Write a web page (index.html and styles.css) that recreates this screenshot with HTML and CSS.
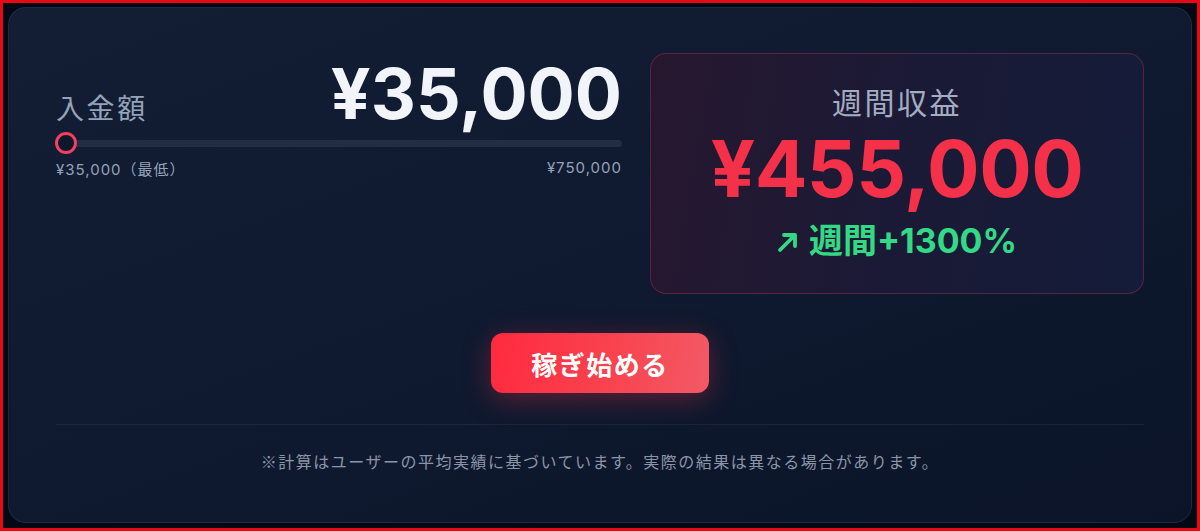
FILE: index.html
```html
<!DOCTYPE html>
<html lang="ja">
<head>
<meta charset="utf-8">
<link rel="stylesheet" href="styles.css">
</head>
<body>
<div class="frame">
  <div class="card">
    <div class="top">
      <div class="deposit">
        <div class="deposit-head">
          <span class="label">入金額</span>
          <span class="amount">¥35,000</span>
        </div>
        <div class="slider">
          <div class="track"></div>
          <div class="thumb"></div>
        </div>
        <div class="range">
          <span>¥35,000（最低）</span>
          <span>¥750,000</span>
        </div>
      </div>
      <div class="result">
        <div class="result-label">週間収益</div>
        <div class="result-value">¥455,000</div>
        <div class="result-rate">
          <svg class="arrow" width="22" height="22" viewBox="0 0 22 22" aria-hidden="true">
            <path d="M3 19 L18 4 M7 4 H18 V15" fill="none" stroke="#34d986" stroke-width="3.8" stroke-linecap="round" stroke-linejoin="round"/>
          </svg>
          <span>週間+1300%</span>
        </div>
      </div>
    </div>
    <div class="cta-row">
      <button class="cta">稼ぎ始める</button>
    </div>
    <div class="divider"></div>
    <p class="note">※計算はユーザーの平均実績に基づいています。実際の結果は異なる場合があります。</p>
  </div>
</div>
</body>
</html>
```

FILE: styles.css
```css
html, body {
  margin: 0;
  padding: 0;
  width: 1200px;
  height: 531px;
  overflow: hidden;
  background: #030712;
}

body {
  font-family: "Inter", "Noto Sans CJK JP", sans-serif;
}

.frame {
  box-sizing: border-box;
  width: 1200px;
  height: 531px;
  border: 3px solid #e50914;
  padding: 4px 5px 5px 5px;
  background: #040814;
}

.card {
  box-sizing: border-box;
  height: 100%;
  border-radius: 18px;
  border: 1px solid rgba(148, 163, 184, 0.12);
  background: linear-gradient(160deg, #131d34 0%, #0f1a30 50%, #0b1428 100%);
  padding: 45px 47px 0 47px;
  display: flex;
  flex-direction: column;
}

.top {
  display: grid;
  grid-template-columns: 566px 494px;
  gap: 28px;
}

.deposit {
  padding-top: 6px;
}

.deposit-head {
  display: flex;
  justify-content: space-between;
  align-items: baseline;
}

.label {
  font-size: 28px;
  letter-spacing: 2.6px;
  color: #94a3b8;
  font-weight: 400;
}

.amount {
  font-size: 70px;
  font-weight: 700;
  line-height: 1;
  color: #f1f5f9;
}

.slider {
  position: relative;
  height: 22px;
  margin-top: 3px;
  display: flex;
  align-items: center;
}

.track {
  width: 100%;
  height: 7px;
  border-radius: 4px;
  background: #222d44;
}

.thumb {
  position: absolute;
  left: -1px;
  top: 0;
  width: 16px;
  height: 16px;
  border-radius: 50%;
  border: 3px solid #f43f5e;
  background: #0f172a;
}

.range {
  display: flex;
  justify-content: space-between;
  font-size: 15px;
  letter-spacing: 1px;
  color: #94a3b8;
  margin-top: 4px;
}

.result {
  box-sizing: border-box;
  height: 241px;
  border-radius: 16px;
  border: 1px solid rgba(244, 63, 94, 0.28);
  background: linear-gradient(100deg, #27172f 0%, #1b1a36 50%, #141c39 100%);
  display: flex;
  flex-direction: column;
  align-items: center;
  padding-top: 31px;
}

.result-label {
  font-size: 30px;
  letter-spacing: 2.5px;
  color: #a3adc2;
  line-height: 36px;
}

.result-value {
  font-size: 78px;
  font-weight: 700;
  color: #f43148;
  line-height: 80px;
  margin-top: 8px;
  letter-spacing: -0.5px;
}

.result-rate {
  display: flex;
  align-items: center;
  gap: 10px;
  font-size: 34px;
  font-weight: 700;
  color: #34d986;
  line-height: 44px;
  margin-top: 10px;
}

.arrow {
  display: block;
  margin-top: 2px;
}

.cta-row {
  display: flex;
  justify-content: center;
  margin-top: 39px;
}

.cta {
  width: 218px;
  height: 60px;
  border: none;
  border-radius: 12px;
  background: linear-gradient(100deg, #ff2a3e 0%, #f9434f 55%, #f25a66 100%);
  color: #ffffff;
  font-family: "Inter", "Noto Sans CJK JP", sans-serif;
  font-size: 26px;
  letter-spacing: 1.5px;
  font-weight: 700;
  box-shadow: 0 6px 28px rgba(244, 49, 72, 0.35);
}

.divider {
  height: 1px;
  background: rgba(148, 163, 184, 0.1);
  margin-top: 31px;
}

.note {
  margin: 26px 0 0 0;
  text-align: center;
  font-family: "Noto Sans CJK JP", "Inter", sans-serif;
  font-size: 16px;
  letter-spacing: 1.5px;
  color: #8b95a8;
  line-height: 20px;
}
```
